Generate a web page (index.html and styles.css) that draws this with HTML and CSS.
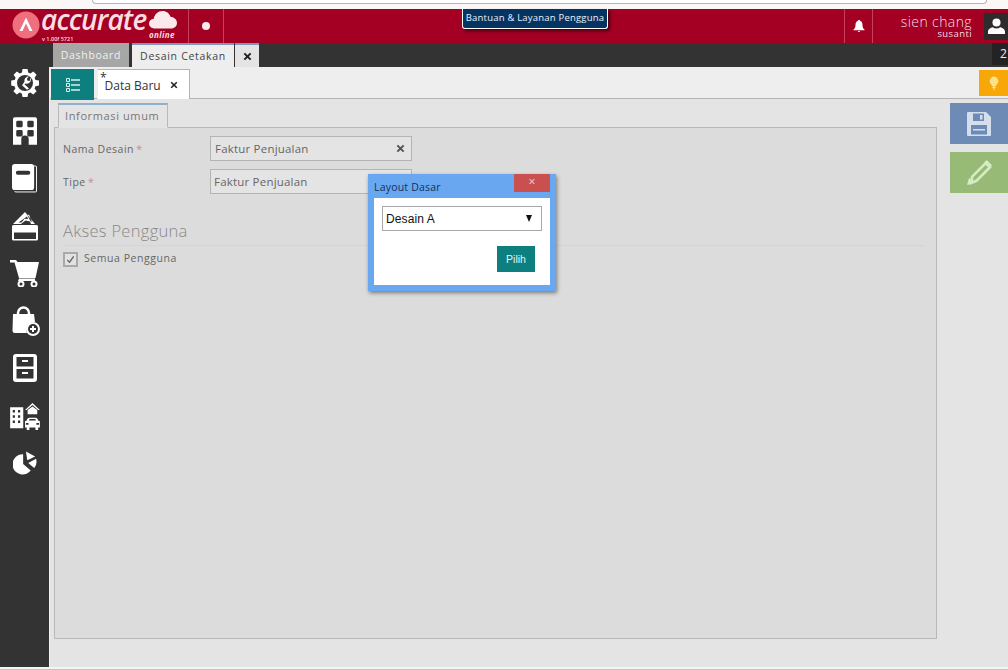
FILE: index.html
```html
<!DOCTYPE html>
<html lang="id">
<head>
<meta charset="utf-8">
<title>Accurate Online</title>
<link rel="stylesheet" href="styles.css">
</head>
<body>
<div class="app">
  <div class="browser-strip"><div class="address"></div></div>
  <header class="header">
    <div class="logo">
      <svg class="logo-mark" viewBox="0 0 28 28" width="28" height="28"><circle cx="14" cy="14" r="13.500" fill="#ee6f7e"/><path d="M7.500 20 14 6.500 20.500 20h-3L14 12.500 10.500 20z" fill="#fff"/></svg>
      <span class="logo-word">accurate</span>
      <span class="logo-version">v 1.00f 5721</span>
      <svg class="logo-cloud" viewBox="0 0 28 18" width="28" height="18"><path d="M6 17.500C2.500 17.500 0 15.300 0 12.500c0-2.600 2-4.600 4.800-4.800C5.500 3.300 9 0 13.500 0c3.800 0 7 2.300 8 5.800 3.500.2 6.500 2.900 6.500 6.200 0 3.100-2.500 5.500-6 5.500z" fill="#fbe9ec"/></svg>
      <span class="logo-online">online</span>
    </div>
    <div class="head-cell dot-cell"><span class="dot"></span></div>
    <div class="head-spacer"></div>
    <div class="head-cell bell-cell">
      <svg viewBox="0 0 12 12" width="12" height="12"><path d="M6 0c.8 0 1.200.5 1.300 1.100C8.800 1.700 9.500 3 9.500 5c0 2.300.6 3.500 2 4.500v.8H.5v-.8c1.400-1 2-2.200 2-4.500 0-2 .7-3.300 2.200-3.900C4.800.5 5.200 0 6 0zM4.800 10.900h2.400C7 11.600 6.600 12 6 12s-1-.4-1.200-1.100z" fill="#fff"/></svg>
    </div>
    <div class="user">
      <span class="user-name">sien chang</span>
      <span class="user-company">susanti</span>
    </div>
    <div class="avatar">
      <svg viewBox="0 0 16 16" width="17" height="17"><circle cx="8" cy="4.200" r="3.800" fill="#fff"/><path d="M0 15v-2c0-2.500 2.500-3.800 4.500-4.300 1 .8 2.200 1.200 3.500 1.200s2.500-.4 3.500-1.200c2 .5 4.500 1.800 4.500 4.300v2z" fill="#fff"/></svg>
    </div>
  </header>
  <nav class="tabbar">
    <div class="tab tab-off">Dashboard</div>
    <div class="tab tab-on">Desain Cetakan</div>
    <div class="tab tab-close">
      <svg viewBox="0 0 10 10" width="9" height="9"><path d="M1.500 1.500l7 7m0-7l-7 7" stroke="#222" stroke-width="2.200"/></svg>
    </div>
    <div class="tab-spacer"></div>
    <div class="tab-count">2</div>
  </nav>
  <div class="body">
    <aside class="sidebar">
      <div class="side-ico"><svg viewBox="0 0 28 28" width="28" height="28"><path fill="#fff" fill-rule="evenodd" d="M11.500 0h5l.7 3.500 2.200.9L22.300 2.400l3.300 3.300-2 3 .9 2.200 3.500.6v5l-3.500.7-.9 2.200 2 2.900-3.300 3.300-3-2-2.100.9-.7 3.500h-5l-.7-3.500-2.100-.9-3 2-3.300-3.300 2-2.900-.9-2.200L.2 16.500v-5l3.500-.6.900-2.200-2-3L5.900 2.400l2.900 2 2.200-.9zM14 6a8 8 0 1 0 0 16 8 8 0 0 0 0-16z"/><path fill="#fff" d="M19.500 8.500c.9 1.900.4 4-1.100 5.300-1.200 1-2.800 1.200-4.200.7l-.7.8 4.500 4.200-2 1.200-5-4.500 2.500-3.400c-.4-1.900.4-3.900 2.100-4.900.7-.4 1.500-.6 2.300-.6l-2 2.400.7 2 2.100.4z"/></svg></div>
      <div class="side-ico"><svg viewBox="0 0 26 30" width="24" height="28"><path fill="#fff" fill-rule="evenodd" d="M2 0h22a2 2 0 0 1 2 2v28H17v-6a4 4 0 0 0-8 0v6H0V2a2 2 0 0 1 2-2zM5 4a1.500 1.500 0 0 0-1.500 1.500v4A1.500 1.500 0 0 0 5 11h4a1.500 1.500 0 0 0 1.500-1.500v-4A1.500 1.500 0 0 0 9 4zm12 0a1.500 1.500 0 0 0-1.500 1.500v4A1.500 1.500 0 0 0 17 11h4a1.500 1.500 0 0 0 1.500-1.500v-4A1.500 1.500 0 0 0 21 4zM5 14a1.500 1.500 0 0 0-1.500 1.500v4A1.500 1.500 0 0 0 5 21h4a1.500 1.500 0 0 0 1.500-1.500v-4A1.500 1.500 0 0 0 9 14zm12 0a1.500 1.500 0 0 0-1.500 1.500v4A1.500 1.500 0 0 0 17 21h4a1.500 1.500 0 0 0 1.500-1.500v-4A1.500 1.500 0 0 0 21 14z"/></svg></div>
      <div class="side-ico"><svg viewBox="0 0 26 30" width="25" height="29"><path fill="none" stroke="#fff" d="M23 2h1.500a1 1 0 0 1 1 1v25a1 1 0 0 1-1 1H4a2 2 0 0 1-1.500-1"/><path fill="#fff" fill-rule="evenodd" d="M3 0h17a3 3 0 0 1 3 3v21a3 3 0 0 1-3 3H3a3 3 0 0 1-3-3V3a3 3 0 0 1 3-3zm3 7a2 2 0 0 0 0 4h11a2 2 0 0 0 0-4z"/></svg></div>
      <div class="side-ico"><svg viewBox="0 0 26 30" width="26" height="30"><path fill="#fff" fill-rule="evenodd" d="M1 13 13 1l10 12h-4l-1-2.500-4.500-1L9 13zM6.500 11.500 15 5.500l1 2.500-3.500-.3-3 3.800zM15.500 4.500l1.500-1 3 7.500-1.500-.7z"/><path fill="#fff" fill-rule="evenodd" d="M1.500 14h23a1.500 1.500 0 0 1 1.500 1.500V28a1.500 1.500 0 0 1-1.500 1.500h-23A1.500 1.500 0 0 1 0 28V15.500A1.500 1.500 0 0 1 1.500 14zM2 21.500V28h22v-6.500z"/></svg></div>
      <div class="side-ico"><svg viewBox="0 0 30 28" width="30" height="28"><path fill="#fff" d="M0 1h6l1.500 2H29l-3.500 16H9L4.500 3.500H0z"/><path fill="#fff" d="M9 19.500h16V22H8z"/><circle cx="11" cy="25" r="2.500" fill="#333" stroke="#fff" stroke-width="2"/><circle cx="24" cy="25" r="2.500" fill="#333" stroke="#fff" stroke-width="2"/></svg></div>
      <div class="side-ico"><svg viewBox="0 0 30 30" width="30" height="30"><path fill="none" stroke="#fff" stroke-width="2.500" d="M8 9V7a5.500 5.500 0 0 1 11 0v2"/><path fill="#fff" d="M3 8h21l1 8a8 8 0 0 0-8 11H5a2.500 2.500 0 0 1-2.500-2.500z"/><circle cx="23" cy="23" r="7" fill="#fff"/><circle cx="23" cy="23" r="5" fill="#333"/><path fill="#fff" d="M22 20h2v2h2v2h-2v2h-2v-2h-2v-2h2z"/></svg></div>
      <div class="side-ico"><svg viewBox="0 0 24 28" width="24" height="28"><path fill="#fff" fill-rule="evenodd" d="M3 0h18a3 3 0 0 1 3 3v22a3 3 0 0 1-3 3H3a3 3 0 0 1-3-3V3a3 3 0 0 1 3-3zm.5 3v9.500h17V3zm0 12v9.500h17V15zM9 6h6v2H9zm0 12h6v2H9z"/></svg></div>
      <div class="side-ico"><svg viewBox="0 0 34 32" width="30" height="28"><path fill="#fff" fill-rule="evenodd" d="M0 6h15v24H0zm3 3v3h2.500V9zm6 0v3h2.500V9zm-6 6v3h2.500v-3zm6 0v3h2.500v-3zm-6 6v3h2.500v-3zm6 0v3h2.500v-3z"/><path fill="#fff" d="M17 9 25.500 1 34 9h-2l-6.500-5.500L19 9z"/><path fill="#fff" d="M20 9l5.500-4 5.500 4v5H20z"/><path fill="#fff" fill-rule="evenodd" d="M19 21c.6-1.800 1.200-3 3-3h7c1.800 0 2.400 1.200 3 3l2 1v7h-2v3h-3v-3h-7v3h-3v-3h-2v-7zm2.500 0h8l-.7-1.500h-6.600zM18 24v2h3v-2zm12 0v2h3v-2z"/></svg></div>
      <div class="side-ico"><svg viewBox="0 0 26 26" width="24" height="24"><path fill="#fff" d="M11 3.500V14l8.200 7.200A11 11 0 1 1 11 3.500z"/><path fill="#fff" d="M14 .5 15.500 10 24 6z"/><path fill="#fff" d="M16.500 13 25 8.500a11 11 0 0 1-2 10z"/></svg></div>
    </aside>
    <main class="work">
      <div class="toolbar">
        <button class="list-btn" type="button" aria-label="Daftar">
          <svg viewBox="0 0 14 14" width="14" height="14"><path fill="none" stroke="#d8f0ee" d="M.5.500h3v3h-3zm0 5h3v3h-3zm0 5h3v3h-3z"/><path stroke="#d8f0ee" stroke-width="1.500" d="M5 2h9M5 7h9M5 12h9"/></svg>
        </button>
        <div class="doc-tab">
          <span class="doc-star">*</span><span class="doc-title">Data Baru</span>
          <svg viewBox="0 0 10 10" width="8" height="8"><path d="M1.500 1.500l7 7m0-7l-7 7" stroke="#222" stroke-width="2"/></svg>
        </div>
        <div class="toolbar-spacer"></div>
        <div class="hint">
          <svg viewBox="0 0 10 14" width="10" height="14"><path fill="#ffe08a" stroke="#ffe9a8" d="M5 1a4 4 0 0 0-2.500 7c.6.600 1 1.200 1 2h3c0-.8.400-1.400 1-2A4 4 0 0 0 5 1z"/><path stroke="#ffe9a8" d="M3.500 11.500h3M4 13h2"/></svg>
        </div>
      </div>
      <div class="content">
        <section class="form-area">
          <div class="subtab">Informasi umum</div>
          <div class="panel">
            <div class="row">
              <label class="label">Nama Desain <em>*</em></label>
              <div class="field">
                <span>Faktur Penjualan</span>
                <svg viewBox="0 0 10 10" width="9" height="9"><path d="M1.500 1.500l7 7m0-7l-7 7" stroke="#555" stroke-width="2.200"/></svg>
              </div>
            </div>
            <div class="row row-second">
              <label class="label">Tipe <em>*</em></label>
              <div class="field field-type"><span>Faktur Penjualan</span></div>
            </div>
            <h2 class="section-title">Akses Pengguna</h2>
            <label class="check">
              <span class="box"><svg viewBox="0 0 10 10" width="9" height="9"><path d="M1.500 5.500 4 8l4.500-6.500" fill="none" stroke="#666" stroke-width="1.500"/></svg></span>
              <span class="check-text">Semua Pengguna</span>
            </label>
          </div>
        </section>
        <div class="side-actions">
          <button class="act act-save" type="button" aria-label="Simpan">
            <svg viewBox="0 0 24 24" width="24" height="24"><path fill="#d5deec" fill-rule="evenodd" d="M1 0h18l5 5v18a1 1 0 0 1-1 1H1a1 1 0 0 1-1-1V1a1 1 0 0 1 1-1zm5 1.500V9h11V1.500zM13 3h2.500v4.500H13zM4 13v9.500h16V13z"/><path fill="#d5deec" d="M6 17h12v1.500H6z"/></svg>
          </button>
          <button class="act act-edit" type="button" aria-label="Ubah">
            <svg viewBox="0 0 24 24" width="25" height="25"><path fill="none" stroke="#d4ebc4" stroke-width="2.600" d="M5 16 18 3l4 4L9 20l-5 2z"/><path fill="#d4ebc4" d="M19 0l5 5-2.500 2.500-5-5zM0 24l2-7 5 5z"/></svg>
          </button>
        </div>
      </div>
    </main>
  </div>
  <div class="page-end"></div>

  <div class="help-tip">Bantuan &amp; Layanan Pengguna</div>

  <div class="dialog">
    <div class="dialog-head">
      <span class="dialog-title">Layout Dasar</span>
      <span class="dialog-close">×</span>
    </div>
    <div class="dialog-body">
      <div class="select"><span>Desain A</span><span class="caret"></span></div>
      <div class="dialog-foot"><button class="pick" type="button">Pilih</button></div>
    </div>
  </div>
</div>
</body>
</html>
```
FILE: styles.css
```css
* { box-sizing: border-box; }
html, body { margin: 0; padding: 0; }
body { width: 1008px; height: 670px; overflow: hidden; background: #fff; font-family: "Open Sans", "Noto Sans", sans-serif; color: #444; }
.app { position: relative; width: 1008px; height: 670px; display: flex; flex-direction: column; overflow: hidden; }

.browser-strip { height: 9px; flex: none; background: #fbf7f7; padding: 0 21px 0 92px; }
.address { height: 4px; background: #fff; border: 1px solid #b5b5b5; border-top: 0; border-radius: 0 0 4px 4px; }

.header { height: 34px; flex: none; display: flex; align-items: stretch; background: #a30023; color: #fff; }
.logo { position: relative; width: 188px; flex: none; }
.logo-mark { position: absolute; left: 12px; top: 2px; }
.logo-word { position: absolute; left: 41px; top: 0; font: italic 600 28px/20px "Open Sans", sans-serif; color: #fbdde2; letter-spacing: -.8px; white-space: nowrap; }
.logo-version { position: absolute; left: 42px; top: 27px; font-size: 5.500px; line-height: 6px; font-weight: 600; color: #fbdde2; white-space: nowrap; }
.logo-cloud { position: absolute; left: 149px; top: 2px; }
.logo-online { position: absolute; left: 149px; top: 21px; font: italic 700 8px/10px "Open Sans", sans-serif; color: #fbdde2; letter-spacing: .4px; }
.head-cell { display: flex; align-items: center; justify-content: center; border-left: 1px solid #c54058; }
.dot-cell { width: 36px; border-right: 1px solid #c54058; }
.dot { width: 8px; height: 8px; border-radius: 50%; background: #fbeaec; }
.head-spacer { flex: 1; }
.bell-cell { width: 29px; border-right: 1px solid #c54058; }
.user { width: 111px; flex: none; display: flex; flex-direction: column; align-items: flex-end; padding-right: 12px; }
.user-name { margin-top: 5px; font-size: 14px; line-height: 15px; font-weight: 300; color: #f6dde2; letter-spacing: .4px; }
.user-company { font-size: 9.500px; line-height: 9px; color: #f6dde2; letter-spacing: .4px; }
.avatar { width: 24px; flex: none; margin: 4px 0 3px; background: #2f2b2d; display: flex; align-items: center; justify-content: center; border-radius: 2px 0 0 2px; }

.tabbar { height: 24px; flex: none; display: flex; align-items: flex-end; background: #333; padding-left: 53px; font-size: 10.500px; letter-spacing: .7px; }
.tab { height: 24px; display: flex; align-items: center; justify-content: center; }
.tab-off { width: 76px; background: #a6a6a6; color: #f0f0f0; margin-right: 3px; }
.tab-on { width: 102px; background: #eee; color: #444; border-top: 2px solid #7e99b8; }
.tab-close { width: 24px; background: #e4e4e4; border-top: 2px solid #7e99b8; margin-left: 1px; }
.tab-spacer { flex: 1; }
.tab-count { width: 16px; height: 22px; align-self: flex-start; background: #232323; color: #eee; font-size: 12px; line-height: 22px; padding-left: 8px; letter-spacing: 0; overflow: hidden; }

.body { flex: 1; min-height: 0; display: flex; }
.sidebar { width: 49px; flex: none; background: #333; display: flex; flex-direction: column; align-items: center; padding-top: 2px; gap: 19.500px; }
.side-ico { height: 28px; display: flex; align-items: center; justify-content: center; }
.work { flex: 1; min-width: 0; background: #e4e4e4; display: flex; flex-direction: column; border-left: 1px solid #f0f0f0; }

.toolbar { height: 32px; flex: none; display: flex; align-items: flex-start; background: #eee; border-bottom: 1px solid #b4b4b4; padding: 2px 0 0 1px; }
.list-btn { width: 43px; height: 31px; border: 0; padding: 0; background: #0d7f7f; display: flex; align-items: center; justify-content: center; margin-right: 3px; position: relative; z-index: 1; }
.doc-tab { width: 93px; height: 30px; background: #fff; border: 1px solid #b4b4b4; border-left-color: #eee; border-bottom: 0; display: flex; align-items: center; padding: 1px 0 0 2px; color: #333; font-size: 12px; position: relative; z-index: 1; }
.doc-star { align-self: flex-start; font-size: 12px; line-height: 14px; margin: 0 -2px 0 0; }
.doc-title { margin-right: 9px; letter-spacing: 0; }
.toolbar-spacer { flex: 1; }
.hint { width: 29px; height: 26px; background: #f8a709; margin-top: 1px; display: flex; align-items: center; justify-content: center; }

.content { flex: 1; min-height: 0; display: flex; align-items: flex-start; padding: 4px 0 0 4px; }
.form-area { width: 883px; flex: none; display: flex; flex-direction: column; }
.subtab { width: 110px; height: 25px; margin-left: 4px; margin-bottom: -1px; background: #e4e4e4; border: 1px solid #b8b8b8; border-top: 2px solid #8eb0cc; border-bottom-color: #e4e4e4; font-size: 11px; line-height: 22px; padding-left: 6px; color: #777; letter-spacing: .62px; position: relative; }
.panel { height: 512px; background: #dcdcdc; border: 1px solid #b8b8b8; padding: 8px 12px 0 8px; }
.row { display: flex; align-items: center; height: 25px; }
.row-second { margin-top: 8px; }
.label { width: 147px; font-size: 10.500px; color: #666; letter-spacing: .5px; }
.label em { color: #c98a94; font-style: normal; margin-left: -1px; }
.field { width: 202px; height: 25px; background: #e4e4e4; border: 1px solid #b4b4b4; display: flex; align-items: center; justify-content: space-between; padding: 0 6px 0 4px; font-size: 11.500px; color: #666; letter-spacing: .2px; }
.field-type { padding-left: 3px; }
.section-title { margin: 25px 0 0; height: 27px; border-bottom: 1px solid #d4d4d4; font-size: 16.500px; line-height: 23px; font-weight: 300; color: #888; letter-spacing: .3px; width: 862px; }
.check { display: flex; align-items: center; gap: 6px; font-size: 10.500px; color: #666; letter-spacing: .55px; height: 26px; }
.check-text { position: relative; top: -1px; }
.box { width: 15px; height: 15px; background: #e2e2e2; border: 2px solid #a9a9a9; display: flex; align-items: center; justify-content: center; }

.side-actions { margin-left: 13px; display: flex; flex-direction: column; gap: 8px; }
.act { width: 58px; height: 41px; border: 0; padding: 0; display: flex; align-items: center; justify-content: center; }
.act-save { background: #6e8bb6; }
.act-edit { background: #97bb77; }

.page-end { height: 3px; flex: none; background: #f5f5f0; border-bottom: 1px solid #c4c4ba; }

.help-tip { position: absolute; left: 462px; top: 9px; width: 146px; height: 20px; background: #063462; color: #eaf1f8; border: 1px solid #fff; border-top: 0; border-radius: 0 0 3px 3px; box-shadow: 2px 2px 3px rgba(0,0,0,.55); font-size: 9.500px; line-height: 18px; text-align: center; white-space: nowrap; letter-spacing: .2px; }

.dialog { position: absolute; left: 368px; top: 174px; width: 188px; height: 117px; background: #69a8f0; padding: 0 6px 6px; box-shadow: 1px 2px 4px rgba(0,0,0,.45); display: flex; flex-direction: column; }
.dialog-head { height: 24px; flex: none; display: flex; justify-content: space-between; }
.dialog-title { font-size: 10.500px; color: #12305a; line-height: 27px; letter-spacing: .2px; }
.dialog-close { width: 36px; height: 18px; background: #c9504f; color: #f0d6d6; text-align: center; font-size: 12px; line-height: 15px; }
.dialog-body { flex: 1; background: #fff; padding: 8px 8px 0; }
.select { height: 25px; border: 1px solid #a8a8a8; display: flex; align-items: center; justify-content: space-between; padding: 0 9px 0 3px; font-family: "Liberation Sans", Arial, sans-serif; font-size: 12px; letter-spacing: .1px; color: #111; }
.caret { width: 0; height: 0; border-left: 3.500px solid transparent; border-right: 3.500px solid transparent; border-top: 7px solid #111; }
.dialog-foot { display: flex; justify-content: flex-end; padding: 15px 7px 0 0; }
.pick { width: 38px; height: 26px; border: 0; padding: 0; background: #0d7f7f; color: #e6f3f3; font-family: "Liberation Sans", Arial, sans-serif; font-size: 10.500px; }
```
